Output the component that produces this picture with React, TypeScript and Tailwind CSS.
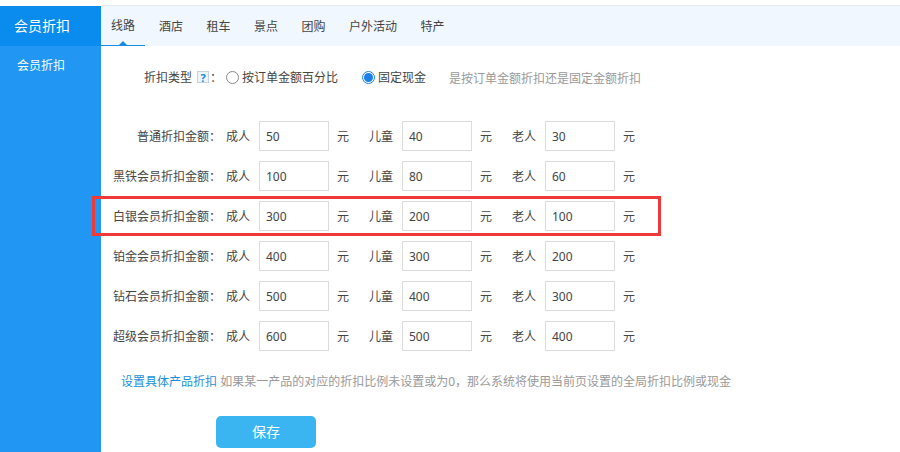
import { useState } from "react";

const tabs = ["线路", "酒店", "租车", "景点", "团购", "户外活动", "特产"];

const rows = [
  { label: "普通折扣金额：", adult: "50", child: "40", old: "30" },
  { label: "黑铁会员折扣金额：", adult: "100", child: "80", old: "60" },
  { label: "白银会员折扣金额：", adult: "300", child: "200", old: "100", marked: true },
  { label: "铂金会员折扣金额：", adult: "400", child: "300", old: "200" },
  { label: "钻石会员折扣金额：", adult: "500", child: "400", old: "300" },
  { label: "超级会员折扣金额：", adult: "600", child: "500", old: "400" },
];

function Amount({ title, value, titleClass }: { title: string; value: string; titleClass: string }) {
  return (
    <>
      <span className={titleClass}>{title}</span>
      <input
        defaultValue={value}
        className="ml-[9px] box-border h-[30px] w-[70px] border border-[#dcdcdc] bg-white pl-[6px] text-xs text-[#444] outline-none"
      />
      <span className="ml-2 w-3 pt-[2px]">元</span>
    </>
  );
}

export default function App() {
  const [kind, setKind] = useState("fixed");

  return (
    <div className="flex h-[452px] w-[900px] overflow-hidden bg-white font-['Noto_Sans','Noto_Sans_CJK_SC',sans-serif] text-xs text-[#444]">
      {/* Sidebar */}
      <aside className="mt-[6px] flex w-[101px] shrink-0 flex-col bg-[#2196f3] text-white">
        <div className="flex h-10 items-center bg-[#0a8bee] pl-[14px] text-sm">会员折扣</div>
        <div className="pl-[17px] pt-[12px]">会员折扣</div>
      </aside>

      <main className="relative mt-[5px] min-w-0 flex-1">
        {/* Tabs */}
        <div className="flex h-[41px] border-t border-[#e3e9f3] bg-[#f0f7fe]">
          {tabs.map((t, i) => (
            <div
              key={t}
              className={
                i === 0
                  ? "relative mr-[-9.5px] flex h-10 w-11 items-center justify-center border-b border-[#1b8be0] pt-[1px]"
                  : "ml-[23.5px] flex h-10 items-center pt-[1px]"
              }
            >
              {t}
              {i === 0 && (
                <span className="absolute bottom-0 left-1/2 -ml-1 border-x-4 border-b-4 border-x-transparent border-b-[#1b8be0]" />
              )}
            </div>
          ))}
        </div>

        {/* Discount type */}
        <div className="ml-[43px] mt-[21px] flex h-5 items-center">
          <span className="pt-[2px]">折扣类型</span>
          <span className="ml-[5px] flex h-[12px] w-[12px] items-center justify-center border border-[#c8d2dc] bg-[#eef4fa] text-[11px] font-bold leading-none text-[#0a8bd8]">
            ?
          </span>
          <span className="ml-[1px] w-[12px] pt-[2px]">：</span>
          <label className="ml-[4px] flex items-center" onClick={() => setKind("percent")}>
            <span className="flex h-[13px] w-[13px] items-center justify-center rounded-full border border-[#888]">
              {kind === "percent" && <span className="h-[7px] w-[7px] rounded-full bg-[#1a7fe8]" />}
            </span>
            <span className="ml-[3px] pt-[2px]">按订单金额百分比</span>
          </label>
          <label className="ml-6 flex items-center" onClick={() => setKind("fixed")}>
            <span className="flex h-[13px] w-[13px] items-center justify-center rounded-full border border-[#1a7fe8]">
              {kind === "fixed" && <span className="h-[9px] w-[9px] rounded-full bg-[#1a7fe8]" />}
            </span>
            <span className="ml-[3px] pt-[2px]">固定现金</span>
          </label>
          <span className="ml-[23px] pt-[4px] text-[#999]">是按订单金额折扣还是固定金额折扣</span>
        </div>

        {/* Amount rows */}
        <div className="mt-[34px] flex flex-col gap-[10px]">
          {rows.map((r) => (
            <div key={r.label} className="relative flex h-[30px] items-center">
              <span className="w-[120px] pt-[2px] text-right">{r.label}</span>
              <span className="ml-[5px]" />
              <Amount title="成人" value={r.adult} titleClass="w-6 pt-[2px]" />
              <Amount title="儿童" value={r.child} titleClass="ml-5 w-6 pt-[2px]" />
              <Amount title="老人" value={r.old} titleClass="ml-5 w-6 pt-[2px]" />
              {r.marked && (
                <div className="pointer-events-none absolute -left-[9px] -top-[5px] h-[40px] w-[569px] border-[3px] border-[#f03a3a]" />
              )}
            </div>
          ))}
        </div>

        {/* Note */}
        <p className="ml-5 mt-[23px] text-[#999]">
          <a className="text-[#1a8fdc]">设置具体产品折扣</a> 如果某一产品的对应的折扣比例未设置或为0，那么系统将使用当前页设置的全局折扣比例或现金
        </p>

        <button className="ml-[115px] mt-[26px] h-8 w-[100px] rounded-[5px] bg-[#3bb4f2] text-sm text-white">
          保存
        </button>
      </main>
    </div>
  );
}
